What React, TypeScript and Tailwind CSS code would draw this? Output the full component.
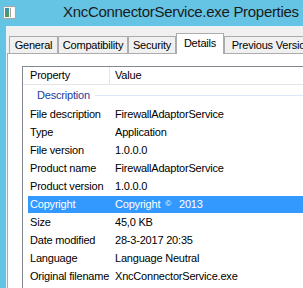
import React from 'react';

// ── Data ──────────────────────────────────────────────────────────────
const TABS = [
  { label: 'General', w: 'w-[49px]' },
  { label: 'Compatibility', w: 'w-[70px]' },
  { label: 'Security', w: 'w-[48px]' },
  { label: 'Details', w: 'w-[48px]', active: true },
  { label: 'Previous Versions', w: 'w-[100px]' },
];

const ROWS: { prop: string; value: React.ReactNode; selected?: boolean }[] = [
  { prop: 'File description', value: 'FirewallAdaptorService' },
  { prop: 'Type', value: 'Application' },
  { prop: 'File version', value: '1.0.0.0' },
  { prop: 'Product name', value: 'FirewallAdaptorService' },
  { prop: 'Product version', value: '1.0.0.0' },
  {
    prop: 'Copyright',
    selected: true,
    value: (
      <>
        Copyright
        <span className="ml-[5px] text-[8px] relative -top-[2px]">©</span>
        <span className="ml-[8px]">2013</span>
      </>
    ),
  },
  { prop: 'Size', value: '45,0 KB' },
  { prop: 'Date modified', value: '28-3-2017 20:35' },
  { prop: 'Language', value: 'Language Neutral' },
  { prop: 'Original filename', value: 'XncConnectorService.exe' },
];

// ── Window icon ───────────────────────────────────────────────────────
function WindowIcon() {
  return (
    <svg width="13" height="13" viewBox="0 0 13 13">
      <defs>
        <linearGradient id="pane" x1="0" y1="0" x2="0" y2="1">
          <stop offset="0" stopColor="#3f8fb0" />
          <stop offset="1" stopColor="#4d9a4a" />
        </linearGradient>
      </defs>
      <rect x="0.5" y="0.5" width="12" height="12" fill="#f4f4f4" stroke="#a8a8a8" />
      <rect x="2" y="2" width="4" height="9" fill="url(#pane)" />
      <rect x="7" y="2" width="1" height="9" fill="#9aa0a6" />
      <rect x="8" y="2" width="3" height="9" fill="#ffffff" />
    </svg>
  );
}

// ── Main component ────────────────────────────────────────────────────
export default function App() {
  return (
    <div className="w-[303px] h-[288px] overflow-hidden bg-[#65c3e4] flex flex-col font-['Liberation_Sans',Arial,sans-serif] text-[11px] tracking-[-0.2px] text-black">
      {/* Title bar */}
      <div className="h-[26px] shrink-0 flex items-center pl-[3px] pb-[2px]">
        <WindowIcon />
        <span className="ml-[47px] text-[15px] tracking-[-0.3px] whitespace-nowrap text-[#1b1b1b]">
          XncConnectorService.exe Properties
        </span>
      </div>

      <div className="flex flex-1 min-h-0">
        <div className="w-[6px] shrink-0" />
        <div className="flex-1 min-w-0 flex flex-col bg-[#f0f0f0] border-l border-t border-[#eaf5fb] pt-[6px]">
          {/* Tabs */}
          <div className="flex items-end pl-[2px] whitespace-nowrap">
            {TABS.map(t =>
              t.active ? (
                <div
                  key={t.label}
                  className={`${t.w} shrink-0 h-[21px] -mb-px relative z-10 bg-white border border-b-0 border-[#acacac] flex items-center justify-center pb-[2px]`}
                >
                  {t.label}
                </div>
              ) : (
                <div
                  key={t.label}
                  className={`${t.w} shrink-0 h-[17px] bg-[#f0f0f0] border border-b-0 border-[#acacac] flex items-center justify-center`}
                >
                  {t.label}
                </div>
              )
            )}
          </div>

          {/* Tab panel */}
          <div className="flex-1 flex flex-col bg-white border-t border-l border-[#acacac] pl-[14px] pt-[12px]">
            <div className="flex-1 flex flex-col border-t border-l border-[#828790] whitespace-nowrap">
              {/* Column header */}
              <div className="h-[18px] shrink-0 flex border-b border-[#e5e5e5]">
                <div className="w-[87px] shrink-0 border-r border-[#e5e5e5] pl-[7px] flex items-center">Property</div>
                <div className="pl-[5px] flex items-center">Value</div>
              </div>

              {/* Group header */}
              <div className="h-[20px] shrink-0 flex items-center pl-[14px]">
                <span className="text-[#1e3c9b]">Description</span>
                <div className="flex-1 h-px bg-[#dbe8f7] ml-[5px]" />
              </div>

              {/* Rows */}
              {ROWS.map(r => (
                <div key={r.prop} className="h-[18px] shrink-0 flex items-center pl-[5px]">
                  <div
                    className={`flex-1 h-[17px] flex items-center ${r.selected ? 'bg-[#3399ff] text-white' : ''}`}
                  >
                    <div className="w-[87px] shrink-0 pl-[2px]">{r.prop}</div>
                    <div>{r.value}</div>
                  </div>
                </div>
              ))}
            </div>
          </div>
        </div>
      </div>
    </div>
  );
}
